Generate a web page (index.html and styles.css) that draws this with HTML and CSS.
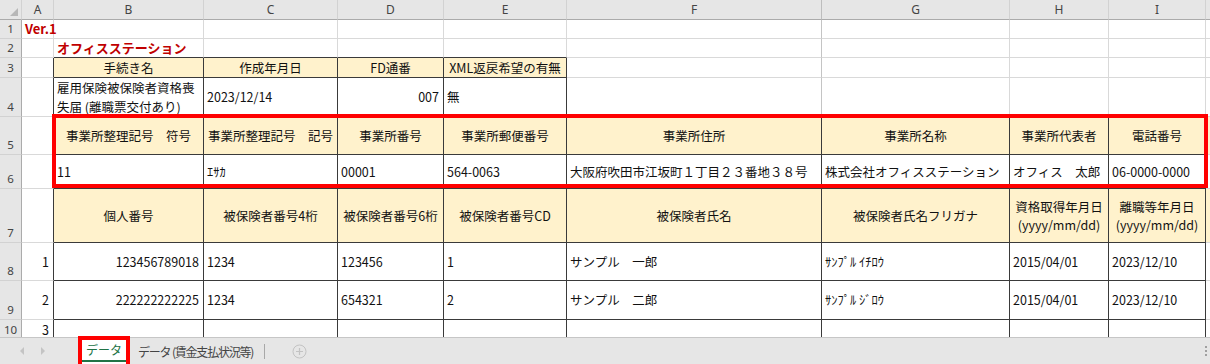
FILE: index.html
```html
<!DOCTYPE html>
<html lang="ja">
<head>
  <meta charset="utf-8">
  <title>データ</title>
  <link rel="stylesheet" href="styles.css">
</head>
<body>
  <div class="sheet">
    <table class="grid">
      <colgroup>
        <col class="c-rh"><col class="c-a"><col class="c-b"><col class="c-c"><col class="c-d">
        <col class="c-e"><col class="c-f"><col class="c-g"><col class="c-h"><col class="c-i"><col class="c-j">
      </colgroup>
      <tr class="hdr">
        <th class="corner"><span class="tri"></span></th>
        <th>A</th><th>B</th><th>C</th><th>D</th><th>E</th><th class="sep">F</th><th>G</th><th>H</th><th>I</th><th></th>
      </tr>
      <tr class="r1">
        <th>1</th>
        <td class="title">Ver.1</td><td></td><td></td><td></td><td></td><td class="fz"></td><td></td><td></td><td></td><td></td>
      </tr>
      <tr class="r2">
        <th>2</th>
        <td></td><td class="title kb">オフィスステーション</td><td class="kb"></td><td class="kb"></td><td class="kb"></td><td class="fz"></td><td></td><td></td><td></td><td></td>
      </tr>
      <tr class="r3">
        <th>3</th>
        <td class="kr"></td><td class="k y ctr">手続き名</td><td class="k y ctr">作成年月日</td><td class="k y ctr">FD通番</td><td class="k y ctr">XML返戻希望の有無</td><td class="fz"></td><td></td><td></td><td></td><td></td>
      </tr>
      <tr class="r4">
        <th>4</th>
        <td class="kr"></td><td class="k wrap">雇用保険被保険者資格喪<br>失届 (離職票交付あり)</td><td class="k">2023/12/14</td><td class="k num">007</td><td class="k">無</td><td class="kb fz"></td><td class="kb"></td><td class="kb"></td><td class="kb"></td><td></td>
      </tr>
      <tr class="r5">
        <th>5</th>
        <td class="kr"></td><td class="k y ctr">事業所整理記号　符号</td><td class="k y ctr">事業所整理記号　記号</td><td class="k y ctr">事業所番号</td><td class="k y ctr">事業所郵便番号</td><td class="k y ctr">事業所住所</td><td class="k y ctr">事業所名称</td><td class="k y ctr">事業所代表者</td><td class="k y ctr">電話番号</td><td class="y"></td>
      </tr>
      <tr class="r6">
        <th>6</th>
        <td class="kr"></td><td class="k">11</td><td class="k">ｴｻｶ</td><td class="k">00001</td><td class="k">564-0063</td><td class="k">大阪府吹田市江坂町１丁目２３番地３８号</td><td class="k">株式会社オフィスステーション</td><td class="k">オフィス　太郎</td><td class="k">06-0000-0000</td><td></td>
      </tr>
      <tr class="r7">
        <th>7</th>
        <td class="kr"></td><td class="k y ctr">個人番号</td><td class="k y ctr">被保険者番号4桁</td><td class="k y ctr">被保険者番号6桁</td><td class="k y ctr">被保険者番号CD</td><td class="k y ctr">被保険者氏名</td><td class="k y ctr">被保険者氏名フリガナ</td><td class="k y ctr">資格取得年月日<br>(yyyy/mm/dd)</td><td class="k y ctr">離職等年月日<br>(yyyy/mm/dd)</td><td class="y"></td>
      </tr>
      <tr class="r8">
        <th>8</th>
        <td class="kr num">1</td><td class="k num">123456789018</td><td class="k">1234</td><td class="k">123456</td><td class="k">1</td><td class="k">サンプル　一郎</td><td class="k">ｻﾝﾌﾟﾙ ｲﾁﾛｳ</td><td class="k">2015/04/01</td><td class="k">2023/12/10</td><td></td>
      </tr>
      <tr class="r9">
        <th>9</th>
        <td class="kr num">2</td><td class="k num">222222222225</td><td class="k">1234</td><td class="k">654321</td><td class="k">2</td><td class="k">サンプル　二郎</td><td class="k">ｻﾝﾌﾟﾙ ｼﾞﾛｳ</td><td class="k">2015/04/01</td><td class="k">2023/12/10</td><td></td>
      </tr>
      <tr class="r10">
        <th>10</th>
        <td class="kr num">3</td><td class="k"></td><td class="k"></td><td class="k"></td><td class="k"></td><td class="k"></td><td class="k"></td><td class="k"></td><td class="k"></td><td></td>
      </tr>
    </table>
    <div class="mark"></div>
  </div>

  <div class="tabs">
    <div class="nav">
      <span class="arrow left"></span>
      <span class="arrow right"></span>
    </div>
    <div class="tab active"><span>データ</span></div>
    <div class="tab tight">データ (賃金支払状況等)</div>
    <div class="divider"></div>
    <div class="add">
      <svg width="15" height="15" viewBox="0 0 15 15">
        <circle cx="7.5" cy="7.5" r="6.5" fill="none" stroke="#c3c3c3" stroke-width="1"/>
        <path d="M7.5 4v7M4 7.5h7" stroke="#c3c3c3" stroke-width="1.2"/>
      </svg>
    </div>
    <div class="grip"><span class="dots"></span></div>
  </div>
</body>
</html>
```

FILE: styles.css
```css
/* sheet view */
body {
  margin: 0;
  width: 1210px;
  height: 364px;
  overflow: hidden;
  background: #fff;
  font-family: "Noto Sans CJK JP", "Noto Sans", sans-serif;
  color: #111;
}
.sheet {
  position: relative;
  height: 337px;
  overflow: hidden;
}
.grid {
  border-collapse: separate;
  border-spacing: 0;
  table-layout: fixed;
  width: 1280px;
  font-size: 12.5px;
}
.c-rh { width: 22px; }
.c-a { width: 32px; }
.c-b { width: 150px; }
.c-c { width: 134px; }
.c-d { width: 106px; }
.c-e { width: 123px; }
.c-f { width: 255px; }
.c-g { width: 188px; }
.c-h { width: 99px; }
.c-i { width: 97px; }
.c-j { width: 74px; }

.grid td {
  box-sizing: border-box;
  padding: 0 3px;
  border-right: 1px solid #d9d9d9;
  border-bottom: 1px solid #d9d9d9;
  white-space: nowrap;
  vertical-align: middle;
  line-height: 18px;
}
.grid th {
  box-sizing: border-box;
  padding: 0;
  font-family: "Noto Sans", "Liberation Sans", sans-serif;
  font-weight: normal;
  font-size: 12px;
  color: #444;
  background: #e6e6e6;
}
.hdr th {
  height: 20px;
  border-right: 1px solid #d2d2d2;
  border-bottom: 1px solid #ababab;
  line-height: 19px;
  vertical-align: middle;
}
.hdr th.sep {
  border-right-color: #bdbdbd;
}
.grid tr:not(.hdr) th {
  border-right: 1px solid #ababab;
  border-bottom: 1px solid #d2d2d2;
  vertical-align: bottom;
  line-height: 16px;
  padding-bottom: 1px;
  font-size: 11.5px;
}
.corner {
  position: relative;
}
.tri {
  position: absolute;
  right: 3px;
  bottom: 3px;
  width: 0;
  height: 0;
  border-left: 8px solid transparent;
  border-bottom: 8px solid #b7b7b7;
}

.r1 { height: 18px; }
.r2 { height: 19px; }
.r3 { height: 20px; }
.r4 { height: 38px; }
.r5 { height: 38px; }
.r6 { height: 34px; }
.r7 { height: 54px; }
.r8 { height: 38px; }
.r9 { height: 39px; }
.r10 { height: 20px; }

.grid td.fz { border-right-color: #c4c4c4; }
.grid td.k { border-right-color: #3a3a3a; border-bottom-color: #3a3a3a; }
.grid td.kr { border-right-color: #3a3a3a; }
.grid td.kb { border-bottom-color: #3a3a3a; }
.grid td.y { background: #fff2cc; }
.grid td.ctr { text-align: center; }
.grid td.num { text-align: right; padding-right: 4px; }
.grid td.wrap { line-height: 19px; }

.title {
  color: #c00000;
  font-weight: bold;
  font-size: 13px;
}

/* red highlight round rows 5 and 6 */
.mark {
  position: absolute;
  left: 52px;
  top: 114px;
  width: 1156px;
  height: 74px;
  box-sizing: border-box;
  border: 4px solid #ff0000;
}

/* sheet tabs */
.tabs {
  display: flex;
  align-items: stretch;
  height: 27px;
  box-sizing: border-box;
  background: #e6e6e6;
  border-top: 1px solid #c6c6c6;
  font-size: 12px;
  color: #444;
  white-space: nowrap;
}
.nav {
  width: 78px;
  display: flex;
  align-items: center;
  gap: 17px;
  padding-left: 20px;
  box-sizing: border-box;
}
.arrow {
  width: 0;
  height: 0;
  border-top: 4px solid transparent;
  border-bottom: 4px solid transparent;
}
.arrow.left { border-right: 4px solid #c4c4c4; }
.arrow.right { border-left: 4px solid #c4c4c4; }
.tab {
  display: flex;
  align-items: center;
  padding: 0 8px;
}
.tab.tight {
  letter-spacing: -1.2px;
}
.tab.active {
  width: 52px;
  box-sizing: border-box;
  margin-top: -2px;
  padding: 0;
  background: #fff;
  border: 4px solid #ff0000;
  border-bottom: none;
  color: #217346;
}
.tab.active span {
  display: flex;
  align-items: center;
  justify-content: center;
  width: 100%;
  height: 100%;
  box-sizing: border-box;
  padding-top: 1px;
  border-bottom: 2px solid #217346;
  margin-bottom: 5px;
}
.divider {
  width: 1px;
  background: #a8a8a8;
  margin: 6px 0 5px 3px;
}
.add {
  display: flex;
  align-items: center;
  margin-left: 27px;
}
.grip {
  margin-left: auto;
  width: 5px;
  display: flex;
  align-items: center;
}
.dots {
  width: 2px;
  height: 2px;
  background: #a0a0a0;
  box-shadow: 0 -4px 0 #a0a0a0, 0 4px 0 #a0a0a0;
}
```
